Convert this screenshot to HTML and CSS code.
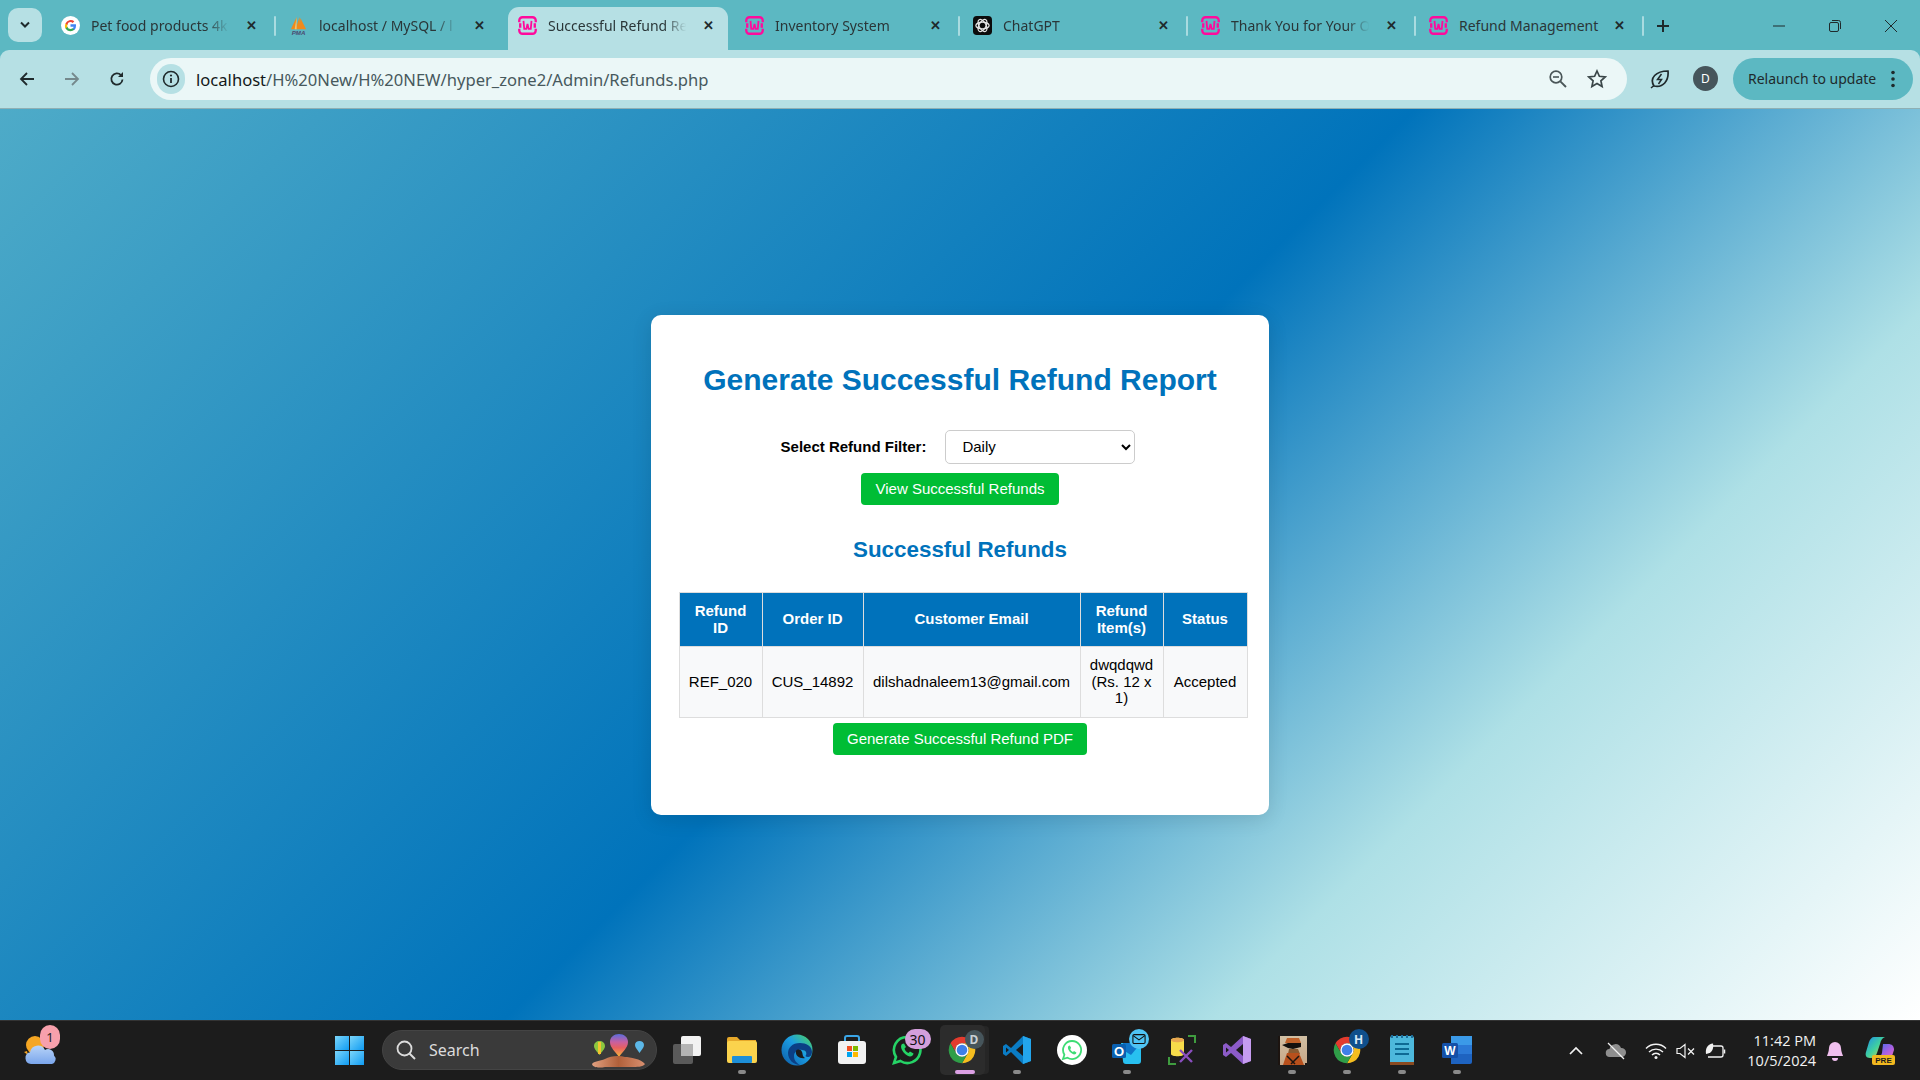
FILE: index.html
```html
<!DOCTYPE html>
<html lang="en">
<head>
<meta charset="utf-8">
<title>Successful Refund Report</title>
<link rel="stylesheet" href="styles.css">
</head>
<body>
<svg class="defs" width="0" height="0" aria-hidden="true">
  <symbol id="wamp" viewBox="0 0 18 18">
    <path d="M1.200 6V4.200A3 3 0 0 1 4.200 1.200h9.600a3 3 0 0 1 3 3V6M1.200 12v1.800a3 3 0 0 0 3 3h9.600a3 3 0 0 0 3-3V12" fill="none" stroke="#ff0a9c" stroke-width="2.200"/>
    <path d="M1 6.800h2.200v4.400H1zM14.800 6.800H17v4.400h-2.200z" fill="#ff0a9c"/>
    <path d="M5.200 4.600l.7 7.600h2L9 7.600l1.100 4.600h2l.7-7.600" fill="none" stroke="#ff0a9c" stroke-width="1.700"/>
  </symbol>
  <symbol id="chrome" viewBox="0 0 24 24">
    <path fill="#e33b2e" d="M12 7h8.660A10 10 0 0 0 3.340 7l4.330 7.500A5 5 0 0 1 12 7z"/>
    <path fill="#f5bd1f" d="M16.330 14.500L12 22a10 10 0 0 0 8.660-15H12a5 5 0 0 1 4.330 7.500z"/>
    <path fill="#2f9e48" d="M7.670 14.500L3.340 7A10 10 0 0 0 12 22l4.330-7.500a5 5 0 0 1-8.660 0z"/>
    <circle cx="12" cy="12" r="5" fill="#fff"/>
    <circle cx="12" cy="12" r="4" fill="#3f7fe8"/>
  </symbol>
  <linearGradient id="edgeG" x1="0" y1="1" x2="1" y2="0"><stop offset="0" stop-color="#0c59a4"/><stop offset=".55" stop-color="#1b9de2"/><stop offset="1" stop-color="#50d65a"/></linearGradient>
  <linearGradient id="cloudG" x1="0" y1="0" x2="0" y2="1"><stop offset="0" stop-color="#b8d4f8"/><stop offset="1" stop-color="#7aa6ec"/></linearGradient>
  <linearGradient id="startG" x1="0" y1="0" x2="1" y2="1"><stop offset="0" stop-color="#7bd6fb"/><stop offset="1" stop-color="#0f9bf2"/></linearGradient>
  <linearGradient id="copG" x1="0" y1="0" x2="1" y2="1"><stop offset="0" stop-color="#1f8fe8"/><stop offset=".5" stop-color="#3fd0a0"/><stop offset="1" stop-color="#e8d83a"/></linearGradient>
  <linearGradient id="copH" x1="0" y1="0" x2="1" y2="1"><stop offset="0" stop-color="#3f6fef"/><stop offset=".6" stop-color="#b060e0"/><stop offset="1" stop-color="#f070b0"/></linearGradient>
  <linearGradient id="pic" x1="0" y1="0" x2="0" y2="1"><stop offset="0" stop-color="#d2c0a4"/><stop offset="1" stop-color="#c8a888"/></linearGradient>
  <linearGradient id="balloon" x1="0" y1="0" x2="0" y2="1"><stop offset="0" stop-color="#5a6cdc"/><stop offset=".35" stop-color="#c860a0"/><stop offset=".6" stop-color="#e86060"/><stop offset="1" stop-color="#f4b83a"/></linearGradient>
  <linearGradient id="rock" x1="0" y1="0" x2="1" y2="0"><stop offset="0" stop-color="#e0a080"/><stop offset=".5" stop-color="#b0603a"/><stop offset="1" stop-color="#d89070"/></linearGradient>
</svg>

<header class="browser">
  <div class="tabstrip">
    <button class="tab-search" type="button">
      <svg width="12" height="8" viewBox="0 0 12 8"><path d="M2 1.500l4 4 4-4" fill="none" stroke="#1f2a2c" stroke-width="2"/></svg>
    </button>
    <div class="tab">
      <svg class="fav" viewBox="0 0 20 20"><circle cx="10" cy="10" r="10" fill="#fff"/><path d="M15.800 10.200c0-.5 0-1-.1-1.400H10v2.600h3.300a2.800 2.800 0 0 1-1.200 1.900v1.500h2A6 6 0 0 0 15.800 10.200z" fill="#4285f4"/><path d="M10 16c1.600 0 3-.5 4-1.500l-2-1.500c-.5.400-1.200.6-2 .6a3.500 3.500 0 0 1-3.300-2.400h-2v1.600A6 6 0 0 0 10 16z" fill="#34a853"/><path d="M6.700 11.700a3.500 3.500 0 0 1 0-2.300V7.800h-2a6 6 0 0 0 0 5.400z" fill="#fbbc05"/><path d="M10 6.400c.9 0 1.700.3 2.300.9l1.700-1.700A6 6 0 0 0 4.700 7.800l2 1.600A3.500 3.500 0 0 1 10 6.400z" fill="#ea4335"/></svg>
      <span class="tab-title">Pet food products 4k</span>
      <span class="tab-x">✕</span>
    </div>
    <div class="tab">
      <svg class="fav" viewBox="0 0 20 20"><path d="M8 1L2 14h5zM11 1L7 14h5zM12 2l-1 12h7z" fill="#f08a1c"/><path d="M8 1L6 14h2z" fill="#f7c46a"/><text class="pma" x="10" y="19.500" text-anchor="middle">PMA</text></svg>
      <span class="tab-title">localhost / MySQL / l</span>
      <span class="tab-x">✕</span>
    </div>
    <div class="tab tab-active">
      <svg class="fav"><use href="#wamp"/></svg>
      <span class="tab-title">Successful Refund Re</span>
      <span class="tab-x">✕</span>
    </div>
    <div class="tab">
      <svg class="fav"><use href="#wamp"/></svg>
      <span class="tab-title">Inventory System</span>
      <span class="tab-x">✕</span>
    </div>
    <div class="tab">
      <svg class="fav" viewBox="0 0 20 20"><rect width="20" height="20" rx="4" fill="#0c0c0c"/><g fill="none" stroke="#e8e8e8" stroke-width="1.300"><ellipse cx="10" cy="10" rx="7" ry="3.600"/><ellipse cx="10" cy="10" rx="7" ry="3.600" transform="rotate(60 10 10)"/><ellipse cx="10" cy="10" rx="7" ry="3.600" transform="rotate(120 10 10)"/></g></svg>
      <span class="tab-title">ChatGPT</span>
      <span class="tab-x">✕</span>
    </div>
    <div class="tab">
      <svg class="fav"><use href="#wamp"/></svg>
      <span class="tab-title">Thank You for Your O</span>
      <span class="tab-x">✕</span>
    </div>
    <div class="tab">
      <svg class="fav"><use href="#wamp"/></svg>
      <span class="tab-title tab-title-full">Refund Management</span>
      <span class="tab-x">✕</span>
    </div>
    <svg class="new-tab" width="14" height="14" viewBox="0 0 14 14"><path d="M7 1v12M1 7h12" stroke="#1f2a2c" stroke-width="2"/></svg>
    <div class="win-controls">
      <svg width="14" height="14" viewBox="0 0 14 14"><path d="M1 7h12" stroke="#1f2a2c" stroke-width="1"/></svg>
      <svg width="14" height="14" viewBox="0 0 14 14"><rect x="1.500" y="3.500" width="9" height="9" rx="1.500" fill="none" stroke="#1f2a2c"/><path d="M4 1.500h6.500a2 2 0 0 1 2 2V10" fill="none" stroke="#1f2a2c"/></svg>
      <svg width="14" height="14" viewBox="0 0 14 14"><path d="M1 1l12 12M13 1L1 13" stroke="#1f2a2c" stroke-width="1"/></svg>
    </div>
  </div>
  <div class="toolbar">
    <div class="nav">
      <svg width="16" height="16" viewBox="0 0 16 16"><path d="M15 8H2M8 2L2 8l6 6" fill="none" stroke="#1f2a2c" stroke-width="1.800"/></svg>
      <svg width="16" height="16" viewBox="0 0 16 16"><path d="M1 8h13M8 2l6 6-6 6" fill="none" stroke="#75898c" stroke-width="1.800"/></svg>
      <svg width="16" height="16" viewBox="0 0 16 16"><path d="M13.500 8.500A5.600 5.600 0 1 1 12 4.200" fill="none" stroke="#1f2a2c" stroke-width="1.800"/><path d="M14 1v5H9z" fill="#1f2a2c"/></svg>
    </div>
    <div class="omnibox">
      <span class="info-chip">
        <svg width="18" height="18" viewBox="0 0 18 18"><circle cx="9" cy="9" r="7.500" fill="none" stroke="#1f2a2c" stroke-width="1.600"/><path d="M9 8v5" stroke="#1f2a2c" stroke-width="1.800"/><circle cx="9" cy="5.500" r="1.100" fill="#1f2a2c"/></svg>
      </span>
      <span class="url"><span class="url-host">localhost</span>/H%20New/H%20NEW/hyper_zone2/Admin/Refunds.php</span>
      <svg class="omni-zoom" width="20" height="20" viewBox="0 0 20 20"><circle cx="8" cy="8" r="5.800" fill="none" stroke="#4a5658" stroke-width="1.700"/><path d="M12.300 12.300L18 18" stroke="#4a5658" stroke-width="1.900"/><path d="M5 8h6" stroke="#4a5658" stroke-width="1.600"/></svg>
      <svg class="omni-star" width="20" height="20" viewBox="0 0 20 20"><path d="M10 2l2.400 5.300 5.800.6-4.300 3.900 1.200 5.700-5.100-2.900-5.100 2.900 1.200-5.700L1.800 7.900l5.800-.6z" fill="none" stroke="#3a4648" stroke-width="1.700"/></svg>
    </div>
    <svg class="leaf" width="20" height="20" viewBox="0 0 20 20"><path d="M4 17C-1 9 6 2 18 2c1 10-5 17-14 15z" fill="none" stroke="#1f2a2c" stroke-width="1.700"/><path d="M11.500 5L7.500 10.500h4L8.500 15" fill="none" stroke="#1f2a2c" stroke-width="1.500"/><path d="M1 19l3-2.500" stroke="#1f2a2c" stroke-width="1.500"/></svg>
    <span class="avatar">D</span>
    <div class="relaunch">
      <span>Relaunch to update</span>
      <svg width="4" height="18" viewBox="0 0 4 18"><circle cx="2" cy="2.500" r="1.800" fill="#1f2a2c"/><circle cx="2" cy="9" r="1.800" fill="#1f2a2c"/><circle cx="2" cy="15.500" r="1.800" fill="#1f2a2c"/></svg>
    </div>
  </div>
</header>

<main class="page">
  <section class="card">
    <h1 class="title">Generate Successful Refund Report</h1>
    <form class="filter">
      <div class="filter-row">
        <label class="filter-label" for="filter">Select Refund Filter:</label>
        <select class="filter-select" id="filter">
          <option>Daily</option>
          <option>Weekly</option>
          <option>Monthly</option>
        </select>
      </div>
      <button class="btn" type="button">View Successful Refunds</button>
    </form>
    <h2 class="subtitle">Successful Refunds</h2>
    <table class="report">
      <colgroup>
        <col class="c-id"><col class="c-order"><col class="c-email"><col class="c-items"><col class="c-status">
      </colgroup>
      <thead>
        <tr><th>Refund ID</th><th>Order ID</th><th>Customer Email</th><th>Refund Item(s)</th><th>Status</th></tr>
      </thead>
      <tbody>
        <tr><td>REF_020</td><td>CUS_14892</td><td>dilshadnaleem13@gmail.com</td><td>dwqdqwd (Rs. 12 x 1)</td><td>Accepted</td></tr>
      </tbody>
    </table>
    <button class="btn btn-pdf" type="button">Generate Successful Refund PDF</button>
  </section>
</main>

<footer class="taskbar">
  <div class="widget">
    <svg width="36" height="36" viewBox="0 0 36 36"><circle cx="13" cy="13" r="9" fill="#f5a623"/><path d="M5 19l-3 1 4 3z" fill="#f5a623"/><path d="M9 32a6 6 0 0 1-1-11.800A8 8 0 0 1 23 18a6 6 0 0 1 9 5.500A5 5 0 0 1 30 32z" fill="url(#cloudG)"/></svg>
    <span class="widget-badge">1</span>
  </div>
  <div class="start">
    <svg width="29" height="29" viewBox="0 0 29 29"><g fill="url(#startG)"><rect width="14" height="14"/><rect x="15" width="14" height="14"/><rect y="15" width="14" height="14"/><rect x="15" y="15" width="14" height="14"/></g></svg>
  </div>
  <div class="search">
    <svg width="22" height="22" viewBox="0 0 22 22"><circle cx="9.500" cy="9.500" r="7" fill="none" stroke="#dcdcdc" stroke-width="1.800"/><path d="M14.500 14.500L20 20" stroke="#dcdcdc" stroke-width="2"/></svg>
    <span class="search-text">Search</span>
    <svg class="search-art" width="56" height="36" viewBox="0 0 56 36"><path d="M3 13c0-3 2.500-5 5.500-5s5.500 2 5.500 5c0 3-3.500 6-5.500 9-2-3-5.500-6-5.500-9z" fill="#8cc63f"/><path d="M7 9h3v12H7z" fill="#f2c230"/><path d="M19 9c0-5 4-8 9-8s9 3 9 8c0 6-6 10-9 15-3-5-9-9-9-15z" fill="url(#balloon)"/><path d="M44 12c0-2.500 2-4 4.500-4s4.500 1.500 4.500 4-2.500 5-4.500 8c-2-3-4.500-5.500-4.500-8z" fill="#5cb8e8"/><path d="M1 31c2-3 8-3 13-5 5-3 14-4 20-2 5 0 16 2 20 7-2 3-8 3-14 3H14c-5 1-12 1-13-3z" fill="url(#rock)"/></svg>
  </div>
  <div class="apps">
    <div class="app">
      <svg width="30" height="30" viewBox="0 0 30 30"><rect x="1" y="9" width="20" height="20" rx="2" fill="#5a5a5a"/><rect x="9" y="1" width="20" height="20" rx="2" fill="#f2f2f2"/><rect x="9" y="9" width="12" height="12" fill="#b4b4b4"/></svg>
    </div>
    <div class="app app-run">
      <svg width="32" height="28" viewBox="0 0 32 28"><path d="M1 3a2 2 0 0 1 2-2h8l3 3h16v6H1z" fill="#e6a82a"/><rect x="1" y="5" width="30" height="22" rx="2" fill="#fbd34d"/><rect x="6" y="20" width="20" height="7" rx="1" fill="#1d8fd8"/></svg>
    </div>
    <div class="app">
      <svg width="32" height="32" viewBox="0 0 32 32"><circle cx="16" cy="16" r="15.500" fill="url(#edgeG)"/><path d="M31 18c0-6-6-9-12-9-8 0-12 5-12 10 0 7 6 12 12 12-5-3-6-6-6-9 0-4 4-7 8-6 4 0 5 3 4 5-1 1 0 2 2 2s4-2 4-5z" fill="#0b3f85"/><path d="M15 17c-1 5 4 8 9 7-3-2-2-4-3-6-1-3-5-3-6-1z" fill="#1c1c1c"/></svg>
    </div>
    <div class="app">
      <svg width="30" height="30" viewBox="0 0 30 30"><path d="M8 7V3a2 2 0 0 1 2-2h10a2 2 0 0 1 2 2v4" fill="none" stroke="#3aa5e6" stroke-width="2"/><rect x="1" y="6" width="28" height="23" rx="3" fill="#f2f2f2"/><rect x="10" y="11" width="5" height="5" fill="#f25022"/><rect x="16" y="11" width="5" height="5" fill="#7fba00"/><rect x="10" y="17" width="5" height="5" fill="#00a4ef"/><rect x="16" y="17" width="5" height="5" fill="#ffb900"/></svg>
    </div>
    <div class="app">
      <svg width="30" height="30" viewBox="0 0 30 30"><path d="M15 2a13 13 0 0 0-11 20L2 28l6.500-2A13 13 0 1 0 15 2z" fill="none" stroke="#25d366" stroke-width="2.600"/><path d="M10 9c-1 1-1.500 3 0 6s5 6 8 6.500c2 0 3.500-1.500 3.500-3l-3.500-2-1.500 1.500c-2-1-3.500-2.500-4-4.500l1.500-1.500-2-3.500z" fill="#25d366"/></svg>
      <span class="badge badge-wa">30</span>
    </div>
    <div class="app app-active">
      <svg width="32" height="32"><use href="#chrome"/></svg>
      <span class="badge badge-profile">D</span>
    </div>
    <div class="app app-run">
      <svg width="30" height="30" viewBox="0 0 30 30"><path d="M21 1L9 13 4 9 1 11v8l3 2 5-4 12 12 8-3V4z" fill="#0a7cc4"/><path d="M21 1l8 3v22l-8 3z" fill="#23a5ec"/><path d="M21 9v12l-7-6z" fill="#1c1c1c"/><path d="M4 12.500l3 2.500-3 2.500z" fill="#1c1c1c"/></svg>
    </div>
    <div class="app">
      <svg width="30" height="30" viewBox="0 0 30 30"><circle cx="15" cy="15" r="15" fill="#fff"/><path d="M15 6a9 9 0 0 0-7.600 13.700L6 24l4.500-1.300A9 9 0 1 0 15 6z" fill="none" stroke="#3ddc74" stroke-width="1.800"/><path d="M11.500 11c-.7.800-.8 2 .1 4s3.400 4 5.400 4.400c1.300 0 2.400-1 2.400-2l-2.400-1.400-1 1c-1.400-.7-2.400-1.700-2.800-3l1-1-1.400-2.400z" fill="#3ddc74"/></svg>
    </div>
    <div class="app app-run">
      <svg width="32" height="30" viewBox="0 0 32 30"><path d="M10 8h20v18a3 3 0 0 1-3 3H15a3 3 0 0 1-3-3z" fill="#28c0f0"/><path d="M12 8h18l-10 12-8-5z" fill="#0f75c8"/><rect x="1" y="9" width="14" height="14" rx="1.500" fill="#0a60b0"/><text class="tile-o" x="8" y="20.500" text-anchor="middle">O</text></svg>
      <span class="badge badge-mail"><svg width="16" height="12" viewBox="0 0 16 12"><rect x=".7" y=".7" width="14.600" height="10.600" rx="1.500" fill="none" stroke="#111" stroke-width="1.300"/><path d="M1 2l7 5 7-5" fill="none" stroke="#111" stroke-width="1.300"/></svg></span>
    </div>
    <div class="app">
      <svg width="30" height="30" viewBox="0 0 30 30"><path d="M21 1h7v7M9 29H2v-7" fill="none" stroke="#3f9c3f" stroke-width="2"/><path d="M4 5c0-3 13-3 13 0v14c0 3-13 3-13 0z" fill="#f7dc4a"/><path d="M4 5c0-3 13-3 13 0s-13 3-13 0z" fill="#e8a850"/><path d="M13 27l12-12M25 27L13 15" stroke="#8a4fbf" stroke-width="2.400"/></svg>
    </div>
    <div class="app">
      <svg width="30" height="30" viewBox="0 0 30 30"><path d="M21 1l8 3v22l-8 3L9 18l-5 4-3-2v-10l3-2 5 4z" fill="#8c5bc8"/><path d="M21 1l8 3v22l-8 3z" fill="#c69cf0"/><path d="M21 9v12l-7-6z" fill="#1c1c1c"/><path d="M4 12.500l3 2.500-3 2.500z" fill="#1c1c1c"/></svg>
    </div>
    <div class="app app-run">
      <svg width="29" height="29" viewBox="0 0 29 29"><rect width="29" height="29" fill="url(#pic)"/><path d="M9 2h12l2 5H7z" fill="#c0622a"/><path d="M4 9l6-2h13v4l-8 2-5-1z" fill="#14110e"/><path d="M11 13h9l2 5H10z" fill="#8a5a30"/><path d="M5 29l4-12h12l5 12z" fill="#b8501c"/><path d="M9 20l8 8M21 20l-8 8" stroke="#1c1410" stroke-width="1.500"/><path d="M0 0h2v29H0zM27 27h2v2h-2z" fill="#1c1410"/></svg>
    </div>
    <div class="app app-run">
      <svg width="32" height="32"><use href="#chrome"/></svg>
      <span class="badge badge-h">H</span>
    </div>
    <div class="app app-run">
      <svg width="24" height="30" viewBox="0 0 24 30"><rect y="1" width="24" height="29" rx="2" fill="#4db8dc"/><rect y="27" width="24" height="3" fill="#8a4a20"/><path d="M2 0v3M7 0v3M12 0v3M17 0v3M22 0v3" stroke="#1c6e9c" stroke-width="2"/><path d="M5 9h14M5 14h14M5 19h14" stroke="#0e6a94" stroke-width="2"/></svg>
    </div>
    <div class="app app-run">
      <svg width="30" height="28" viewBox="0 0 30 28"><path d="M9 0h19a2 2 0 0 1 2 2v24a2 2 0 0 1-2 2H9z" fill="#1e63c0"/><path d="M9 0h21v9H9z" fill="#3b9ae8"/><path d="M9 9h21v9H9z" fill="#2b79d6"/><rect y="7" width="16" height="15" rx="1.500" fill="#1450a8"/><text class="tile-w" x="8" y="19" text-anchor="middle">W</text></svg>
    </div>
  </div>
  <div class="tray">
    <svg class="tray-chevron" width="14" height="9" viewBox="0 0 14 9"><path d="M1 8l6-6 6 6" fill="none" stroke="#f2f2f2" stroke-width="1.700"/></svg>
    <svg class="tray-cloud" width="22" height="18" viewBox="0 0 22 18"><path d="M5 15a4 4 0 0 1-.5-8A6 6 0 0 1 16 6a4.500 4.500 0 0 1 1 9z" fill="#8f8f8f"/><path d="M3 1l16 16" stroke="#f2f2f2" stroke-width="1.300"/></svg>
    <svg class="tray-wifi" width="22" height="16" viewBox="0 0 22 16"><path d="M1 5.500a14 14 0 0 1 20 0M4 9a10 10 0 0 1 14 0M7 12a5.500 5.500 0 0 1 8 0" fill="none" stroke="#f2f2f2" stroke-width="1.400"/><circle cx="11" cy="14.500" r="1.500" fill="#f2f2f2"/></svg>
    <svg class="tray-sound" width="20" height="16" viewBox="0 0 20 16"><path d="M1 5.500h3L9 1.500v13l-5-4H1z" fill="none" stroke="#f2f2f2" stroke-width="1.200"/><path d="M12 5.500l6 6M18 5.500l-6 6" stroke="#f2f2f2" stroke-width="1.300"/></svg>
    <svg class="tray-batt" width="21" height="16" viewBox="0 0 21 16"><path d="M8 3h8a2 2 0 0 1 2 2v7a2 2 0 0 1-2 2H3" fill="none" stroke="#f2f2f2" stroke-width="1.300"/><path d="M19.500 6.500v4" stroke="#f2f2f2" stroke-width="1.500"/><path d="M1 11C0 5 3 1 8 .5c1 5-1 9-5 10z" fill="#f2f2f2"/></svg>
    <div class="clock"><span>11:42 PM</span><span>10/5/2024</span></div>
    <svg class="tray-bell" width="18" height="20" viewBox="0 0 18 20"><path d="M9 1a6 6 0 0 0-6 6c0 4-2 7-2 8h16c0-1-2-4-2-8a6 6 0 0 0-6-6z" fill="#f0bfee"/><path d="M6 17h6a3 3 0 0 1-6 0z" fill="#f0bfee"/></svg>
    <svg class="tray-copilot" width="30" height="30" viewBox="0 0 30 30"><path d="M9 1h11c-3 1-4 3-5 7l-3 9c-1 3-3 5-6 5H5C1 22 0 19 1 16L4 6c1-3 3-5 5-5z" fill="url(#copG)"/><path d="M18 8h5c4 0 6 2 6 6l-2 6c-1 2-2 3-4 3H12c3-1 4-3 5-6z" fill="url(#copH)"/><rect x="7" y="19" width="23" height="10" rx="2" fill="#f2b81f"/><text class="tile-pre" x="18.500" y="27" text-anchor="middle">PRE</text></svg>
  </div>
</footer>
</body>
</html>
```
FILE: styles.css
```css
* { box-sizing: border-box; }
html, body { height: 100%; }
body {
  margin: 0;
  height: 1080px;
  overflow: hidden;
  display: flex;
  flex-direction: column;
  font-family: "Liberation Sans", Arial, sans-serif;
  background: #1c1c1c;
}
.defs { position: absolute; }

/* Browser chrome */
.browser { flex: none; height: 109px; background: #5cb8c2; font-family: "Noto Sans", sans-serif; color: #1f2a2c; }
.tabstrip { height: 50px; display: flex; align-items: flex-end; padding-left: 8px; position: relative; }
.tab-search {
  width: 34px; height: 34px; margin: 0 10px 8px 0; padding: 0; border: 0;
  border-radius: 10px; background: #b6e0e4;
  display: flex; align-items: center; justify-content: center;
}
.tab {
  width: 228px; height: 43px; flex: none; position: relative;
  display: flex; align-items: center; gap: 11px;
  padding: 0 0 7px 9px;
  font-size: 14px; color: #2a3638;
}
.tab::after {
  content: ""; position: absolute; right: 4px; top: 9px; width: 2px; height: 20px;
  background: #a9dbe0; border-radius: 1px;
}
.tab-active { background: #b6e0e4; border-radius: 11px 11px 0 0; width: 220px; margin: 0 8px 0 0; padding-left: 10px; }
.tab-active::after, .tab:nth-child(3)::after { display: none; }
.fav { width: 19px; height: 19px; flex: none; }
.tab-title {
  width: 141px; white-space: nowrap; overflow: hidden;
  -webkit-mask-image: linear-gradient(to right, #000 82%, transparent 98%);
  mask-image: linear-gradient(to right, #000 82%, transparent 98%);
}
.tab-title-full { -webkit-mask-image: none; mask-image: none; }
.tab-x { font-size: 13px; font-weight: 700; margin-left: 3px; line-height: 1; color: #1f2a2c; }
.pma { font: italic 700 6.500px "Liberation Sans", sans-serif; fill: #4a4a70; }
.new-tab { margin: 0 0 17px 8px; }
.win-controls {
  margin: 0 22px 17px auto; display: flex; gap: 42px;
}
.toolbar {
  height: 59px; background: #b6e0e4; border-radius: 9px 9px 0 0;
  border-bottom: 1px solid #8fb0b4;
  display: flex; align-items: center; padding: 0 8px 1px 19px;
}
.nav { display: flex; gap: 29px; width: 131px; flex: none; }
.omnibox {
  width: 1477px; height: 42px; border-radius: 21px; background: #ebf7f7;
  display: flex; align-items: center; padding-left: 7px; flex: none;
}
.info-chip {
  width: 28px; height: 30px; border-radius: 15px; background: #b6e0e4;
  display: flex; align-items: center; justify-content: center; flex: none;
}
.url { margin-left: 11px; padding-top: 1px; font-size: 16.600px; color: #47595d; white-space: nowrap; flex: 1; }
.url-host { color: #14191a; }
.omni-zoom { margin-right: 19px; }
.omni-star { margin-right: 20px; }
.leaf { margin-left: 23px; flex: none; }
.avatar {
  margin-left: 23px; width: 25px; height: 25px; border-radius: 50%; flex: none;
  background: #46555b; color: #fff; font-size: 12px;
  display: flex; align-items: center; justify-content: center;
}
.relaunch {
  margin-left: 15px; flex: none; width: 180px; height: 42px; border-radius: 21px; background: #5cb8c2;
  display: flex; align-items: center; padding-left: 15px; gap: 15px; font-size: 14px; white-space: nowrap;
}

/* Page */
.page {
  flex: none; height: 911px;
  display: flex; align-items: center; justify-content: center;
  background: linear-gradient(135deg, #4eabc8 0%, #0073bb 50%, #aee0e6 75%, #ffffff 100%);
}
.card {
  width: 618px; height: 500px; background: #fff; border-radius: 10px;
  padding: 46px 28px 0;
  box-shadow: 0 4px 20px rgba(0, 0, 0, .12);
  display: flex; flex-direction: column; align-items: center;
}
.title { margin: 0 0 32px; font-size: 30px; font-weight: 700; color: #0072bb; line-height: 37px; white-space: nowrap; }
.filter { display: flex; flex-direction: column; align-items: center; gap: 9px; }
.filter-row { display: flex; align-items: center; gap: 19px; padding-right: 4px; }
.filter-label { font-size: 15px; font-weight: 700; color: #000; }
.filter-select {
  width: 190px; height: 34px; padding: 0 12px; font: 15px "Liberation Sans", sans-serif;
  border: 1px solid #ccc; border-radius: 5px; background: #fff; color: #000;
}
.btn {
  height: 32px; padding: 0 14.500px; border: 0; border-radius: 4px;
  background: #00bd35; color: #fff;
  font: 15px "Liberation Sans", sans-serif; white-space: nowrap;
}
.subtitle { margin: 31px 0 28px; font-size: 22.400px; font-weight: 700; color: #0072bb; line-height: 28px; }
.report { width: 568px; margin-left: 6px; table-layout: fixed; border-collapse: collapse; font-size: 15px; line-height: 16.700px; text-align: center; }
.c-id { width: 83px; } .c-order { width: 101px; } .c-email { width: 217px; } .c-items { width: 83px; } .c-status { width: 84px; }
.report th { height: 54px; padding: 1px 8px 0; background: #0072bb; color: #fff; border: 1px solid #ddd; font-weight: 700; }
.report td { height: 71px; padding: 1px 7px 0; background: #f8f9fa; color: #000; border: 1px solid #ddd; }
.btn-pdf { margin-top: 5px; }

/* Taskbar */
.taskbar {
  flex: none; height: 60px; padding-bottom: 1px; background: #1c1c1c; border-top: 1px solid #333;
  display: flex; align-items: center; color: #f2f2f2; position: relative;
  font-family: "Noto Sans", sans-serif;
}
.widget { width: 335px; padding-left: 22px; position: relative; display: flex; align-items: center; }
.widget-badge {
  position: absolute; left: 40px; top: -7px; width: 20px; height: 24px; border-radius: 10px;
  background: #f7a0ac; color: #222; font-size: 13px; display: flex; align-items: center; justify-content: center;
}
.start { width: 47px; display: flex; align-items: center; }
.search {
  width: 275px; height: 40px; border-radius: 20px; background: #3a3a3a; border: 1px solid #444;
  display: flex; align-items: center; padding-left: 12px; gap: 12px; position: relative; font-size: 16px; color: #dcdcdc;
}
.search-art { position: absolute; right: 9px; top: 2px; }
.apps { display: flex; margin-left: 2.500px; }
.app { width: 55px; height: 50px; display: flex; align-items: center; justify-content: center; position: relative; }
.app-run::after {
  content: ""; position: absolute; left: 23.500px; bottom: 1px; width: 8px; height: 4px; border-radius: 2px; background: #8a8a8a;
}
.app-active { background: #2c2c2c; border-radius: 5px; width: 45px; margin: 0 5px; box-shadow: 5px 0 0 -1px #262626; }
.app-active::after {
  content: ""; position: absolute; left: 15px; bottom: 1px; width: 20px; height: 4px; border-radius: 2px; background: #dba0e4;
}
.badge { position: absolute; display: flex; align-items: center; justify-content: center; border-radius: 50%; }
.badge-wa { left: 25px; top: 4px; width: 26px; height: 20px; border-radius: 10px; background: #d49fdc; color: #111; font-size: 14px; }
.badge-profile { left: 25px; top: 5px; width: 19px; height: 19px; background: #46555b; color: #c8d0d4; font-size: 12px; font-weight: 700; }
.badge-h { left: 29px; top: 4px; width: 20px; height: 20px; background: #0f4f8c; color: #d8e8f8; font-size: 12px; font-weight: 700; }
.badge-mail { left: 29px; top: 4px; width: 20px; height: 20px; background: #4fc4f4; }
.badge-mail svg { width: 14px; height: 10px; }
.tile-o { font: 700 13px "Liberation Sans", sans-serif; fill: #fff; }
.tile-w { font: 700 12px "Liberation Sans", sans-serif; fill: #fff; }
.tile-pre { font: 700 8px "Liberation Sans", sans-serif; fill: #1c1c1c; }
.tray { position: absolute; right: 0; top: 0; bottom: 0; display: flex; align-items: center; }
.tray-chevron { margin-right: 22px; }
.tray-cloud { margin-right: 18px; }
.tray-wifi { margin-right: 9px; }
.tray-sound { margin-right: 9px; }
.tray-batt { margin-right: 10px; }
.clock { display: flex; flex-direction: column; align-items: flex-end; font-size: 14.500px; line-height: 20px; width: 80px; font-family: "Open Sans", sans-serif; }
.tray-bell { margin-left: 10px; }
.tray-copilot { margin: 0 25px 0 21px; }
```
